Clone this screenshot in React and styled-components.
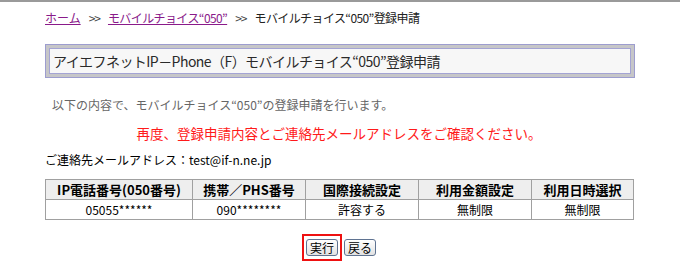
import React from "react";
import styled, { createGlobalStyle } from "styled-components";

const GlobalStyle = createGlobalStyle`
  html, body {
    margin: 0;
    padding: 0;
    background: #ffffff;
  }
  body {
    font-family: "Noto Sans CJK JP", "DejaVu Sans", sans-serif;
    font-size: 12px;
    color: #000;
  }
`;

const Page = styled.div`
  border-top: 2px solid #9a9a9a;
  min-height: 269px;
`;

const Content = styled.div`
  width: 590px;
  margin-left: 45px;
  display: flex;
  flex-direction: column;
`;

const Breadcrumb = styled.div`
  margin-top: 9px;
  line-height: 14px;
  font-size: 12px;
  color: #222;
  display: flex;
  gap: 8px;
  align-items: center;
`;

const Crumb = styled.a`
  color: #8a1a8a;
  text-decoration: underline;
`;

const Quoted = styled.span`
  letter-spacing: ${(p) => (p.$tight ? "-0.6px" : "0")};
`;

const Sep = styled.span`
  color: #444;
  letter-spacing: -1px;
`;

const TitleFrame = styled.div`
  margin-top: 19px;
  border: 1px solid #9d9dcf;
  background: #c6c6c8;
  padding: 3px;
`;

const TitleInner = styled.h1`
  margin: 0;
  border: 1px solid #a4a4d4;
  background: #f7f7f7;
  height: 24px;
  line-height: 24px;
  padding-left: 3px;
  font-size: 14px;
  font-weight: normal;
  letter-spacing: -0.55px;
  color: #2a2a2a;
`;

const Lead = styled.p`
  margin: 19px 0 0 7px;
  line-height: 16px;
  font-size: 12px;
  color: #666;
`;

const Notice = styled.p`
  margin: 11px 0 0;
  width: 588px;
  text-align: center;
  line-height: 18px;
  font-size: 13.5px;
  color: #ff1a1a;
`;

const Mail = styled.p`
  margin: 10px 0 0;
  line-height: 16px;
  font-size: 12px;
`;

const Table = styled.table`
  margin-top: 11px;
  width: 588px;
  border-collapse: collapse;
  table-layout: fixed;
`;

const Th = styled.th`
  height: 19px;
  padding: 0;
  border: 1px solid #a0a0a0;
  background: #eeeeee;
  font-size: 13px;
  font-weight: bold;
  text-align: center;
`;

const Td = styled.td`
  height: 19px;
  padding: 0;
  border: 1px solid #a0a0a0;
  font-size: 12px;
  text-align: center;
`;

const Actions = styled.div`
  margin-top: 14px;
  width: 588px;
  display: flex;
  justify-content: center;
  align-items: center;
  gap: 2px;
`;

const Highlight = styled.div`
  border: 2px solid #ee1111;
  padding: 3px 2px;
  display: flex;
`;

const Button = styled.button`
  height: 17px;
  padding: 0 3px;
  font-family: "Noto Sans CJK JP", sans-serif;
  font-size: 12px;
  line-height: 15px;
  color: #000;
  border: 1px solid #5f7391;
  border-radius: 3px;
  background: linear-gradient(#ffffff, #e2e2e2);
  cursor: pointer;
`;

const columns = [
  { label: "IP電話番号(050番号)", width: 147, value: "05055******" },
  { label: "携帯／PHS番号", width: 113, value: "090********" },
  { label: "国際接続設定", width: 113, value: "許容する" },
  { label: "利用金額設定", width: 113, value: "無制限" },
  { label: "利用日時選択", width: 102, value: "無制限" },
];

export default function App() {
  return (
    <Page>
      <GlobalStyle />
      <Content>
        <Breadcrumb>
          <Crumb href="#">ホーム</Crumb>
          <Sep>&gt;&gt;</Sep>
          <Crumb href="#">
            <Quoted $tight>モバイルチョイス“050”</Quoted>
          </Crumb>
          <Sep>&gt;&gt;</Sep>
          <Quoted $tight>モバイルチョイス“050”登録申請</Quoted>
        </Breadcrumb>

        <TitleFrame>
          <TitleInner>アイエフネットIP－Phone（F）モバイルチョイス“050”登録申請</TitleInner>
        </TitleFrame>

        <Lead>以下の内容で、モバイルチョイス“050”の登録申請を行います。</Lead>
        <Notice>再度、登録申請内容とご連絡先メールアドレスをご確認ください。</Notice>
        <Mail>ご連絡先メールアドレス：test@if-n.ne.jp</Mail>

        <Table>
          <colgroup>
            {columns.map((c) => (
              <col key={c.label} style={{ width: c.width }} />
            ))}
          </colgroup>
          <thead>
            <tr>
              {columns.map((c) => (
                <Th key={c.label}>{c.label}</Th>
              ))}
            </tr>
          </thead>
          <tbody>
            <tr>
              {columns.map((c) => (
                <Td key={c.label}>{c.value}</Td>
              ))}
            </tr>
          </tbody>
        </Table>

        <Actions>
          <Highlight>
            <Button>実行</Button>
          </Highlight>
          <Button>戻る</Button>
        </Actions>
      </Content>
    </Page>
  );
}
